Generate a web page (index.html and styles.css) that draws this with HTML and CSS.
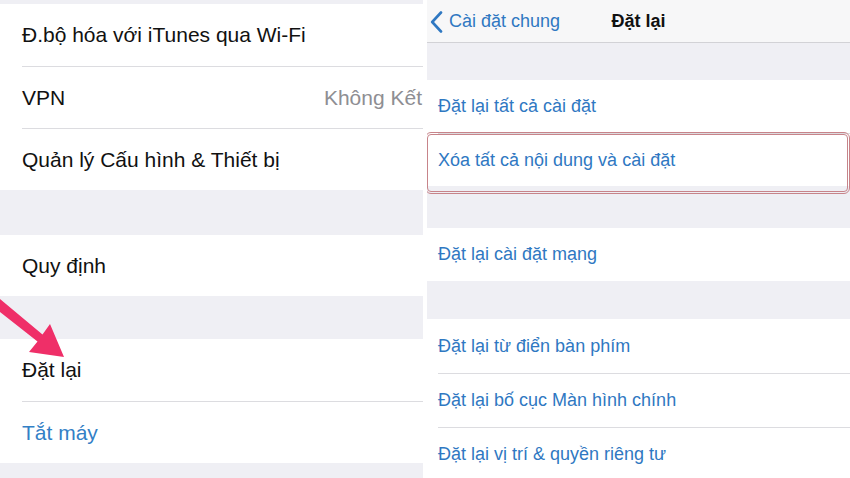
FILE: index.html
```html
<!DOCTYPE html>
<html lang="vi">
<head>
    <meta charset="UTF-8">
    <meta name="viewport" content="width=device-width, initial-scale=1.0">
    <title>Cài đặt - Đặt lại</title>
    <link rel="stylesheet" href="styles.css">
</head>
<body>
    <div class="screens">
        <!-- Écran gauche : Cài đặt chung -->
        <section class="screen screen-left">
            <div class="spacer top-spacer"></div>
            <div class="group">
                <div class="cell">Đ.bộ hóa với iTunes qua Wi-Fi</div>
                <div class="cell">VPN <span class="detail">Không Kết</span></div>
                <div class="cell">Quản lý Cấu hình &amp; Thiết bị</div>
            </div>
            <div class="spacer gap-1"></div>
            <div class="group">
                <div class="cell single">Quy định</div>
            </div>
            <div class="spacer gap-2"></div>
            <div class="group">
                <div class="cell">Đặt lại</div>
                <div class="cell link">Tắt máy</div>
            </div>

            <!-- Flèche d'annotation -->
            <svg class="arrow" width="70" height="70" viewBox="0 290 70 70">
                <polygon points="0,299 42.5,334.5 50,324 64,357 29,352 37.5,341.5 0,312" fill="#ef2f68"/>
            </svg>
        </section>

        <div class="divider"></div>

        <!-- Écran droit : Đặt lại -->
        <section class="screen screen-right">
            <header class="navbar">
                <div class="back">
                    <svg width="13" height="22" viewBox="0 0 13 22">
                        <path d="M11 1.5 L2.2 11 L11 20.5" fill="none" stroke="#2f78c2" stroke-width="2.6" stroke-linecap="round" stroke-linejoin="round"/>
                    </svg>
                    <span>Cài đặt chung</span>
                </div>
                <div class="nav-title">Đặt lại</div>
                <div></div>
            </header>
            <div class="spacer r-gap-0"></div>
            <div class="group">
                <div class="rcell">Đặt lại tất cả cài đặt</div>
                <div class="rcell highlighted">Xóa tất cả nội dung và cài đặt
                    <span class="mark"></span>
                </div>
            </div>
            <div class="spacer r-gap-1"></div>
            <div class="group">
                <div class="rcell">Đặt lại cài đặt mạng</div>
            </div>
            <div class="spacer r-gap-2"></div>
            <div class="group">
                <div class="rcell tall">Đặt lại từ điển bàn phím</div>
                <div class="rcell tall">Đặt lại bố cục Màn hình chính</div>
                <div class="rcell tall">Đặt lại vị trí &amp; quyền riêng tư</div>
            </div>
        </section>
    </div>
</body>
</html>
```

FILE: styles.css
```css
body {
    margin: 0;
    padding: 0;
    background-color: white;
    font-family: "Liberation Sans", Arial, sans-serif;
    overflow: hidden;
}

.screens {
    display: flex;
    width: 850px;
    height: 478px;
    overflow: hidden;
}

.screen {
    background-color: #efeff4;
    overflow: hidden;
}

.screen-left {
    width: 423px;
    position: relative;
}

.divider {
    width: 4px;
    background-color: white;
}

.screen-right {
    flex: 1;
}

.group {
    background-color: white;
}

/* ----- écran gauche ----- */

.top-spacer { height: 4px; }
.gap-1 { height: 45px; }
.gap-2 { height: 43px; }

.cell {
    box-sizing: border-box;
    height: 62px;
    margin-left: 22px;
    display: flex;
    align-items: center;
    font-size: 21px;
    color: #111;
    white-space: nowrap;
}

.cell + .cell {
    border-top: 1px solid #dcdce0;
}

.cell.single {
    height: 61px;
}

.cell.link {
    color: #3380c6;
}

.detail {
    margin-left: auto;
    margin-right: 1px;
    color: #8e8e93;
}

.arrow {
    position: absolute;
    left: 0;
    top: 290px;
}

/* ----- écran droit ----- */

.navbar {
    box-sizing: border-box;
    height: 43px;
    background-color: #f7f7f8;
    border-bottom: 1px solid #d2d2d6;
    display: grid;
    grid-template-columns: 1fr auto 1fr;
    align-items: center;
    padding-top: 1px;
}

.back {
    display: flex;
    align-items: center;
    gap: 6px;
    padding-left: 3px;
    color: #2f78c2;
    font-size: 18px;
}

.nav-title {
    font-size: 18px;
    font-weight: bold;
    color: #111;
}

.r-gap-0 { height: 37px; }
.r-gap-1 { height: 42px; }
.r-gap-2 { height: 38px; }

.rcell {
    box-sizing: border-box;
    height: 53px;
    margin-left: 11px;
    display: flex;
    align-items: center;
    font-size: 18px;
    color: #2f78c2;
    white-space: nowrap;
}

.rcell + .rcell {
    border-top: 1px solid #dcdce0;
}

.rcell.tall {
    height: 54px;
}

.highlighted {
    position: relative;
}

.mark {
    position: absolute;
    left: -13px;
    right: 0;
    top: -2px;
    bottom: -8px;
    border: 3px double #c7848a;
    border-radius: 6px;
}
```
